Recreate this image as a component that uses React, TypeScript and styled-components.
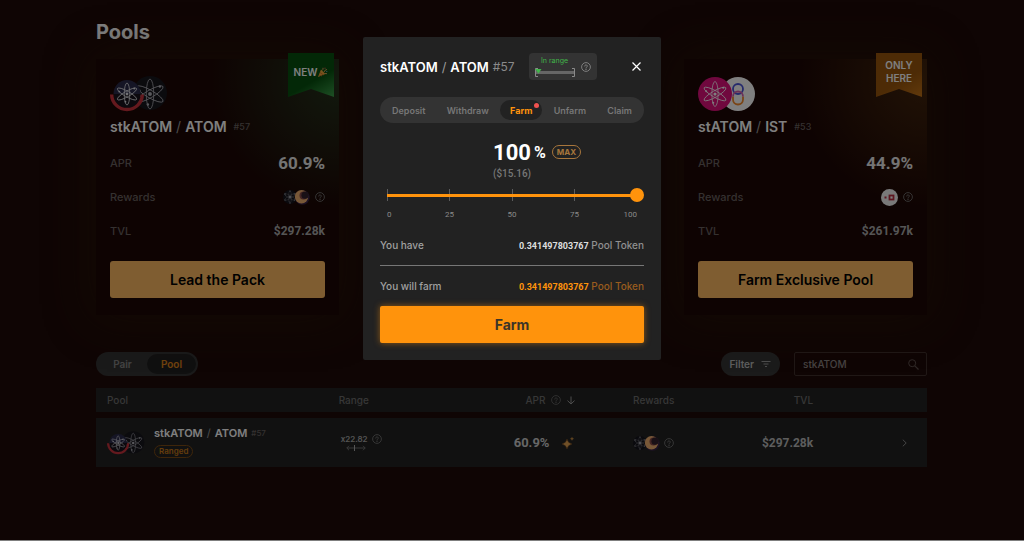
import React, { useState } from 'react';
import styled, { createGlobalStyle, css } from 'styled-components';

const sans = `Inter, "Liberation Sans", sans-serif`;
const digits = `Roboto, "Liberation Sans", sans-serif`;

const GlobalStyle = createGlobalStyle`
  *, *::before, *::after { box-sizing: border-box; }
  body { margin: 0; background: #1e0a08; font-family: ${sans}; }
  button, input { font-family: inherit; }
  button { border: 0; padding: 0; background: none; color: inherit; cursor: pointer; }
  h1, h2, p { margin: 0; }
  svg { display: block; flex: none; }
`;

/* ---------- icons ---------- */

const HelpIcon = ({ size = 10, color = '#777' }: { size?: number; color?: string }) => (
  <svg width={size} height={size} viewBox="0 0 20 20" fill="none" stroke={color} strokeWidth="1.7" aria-hidden="true">
    <circle cx="10" cy="10" r="8.8" />
    <path d="M7.4 8.2a2.6 2.4 0 1 1 3.8 2.1c-.9.5-1.2.9-1.2 1.8" strokeLinecap="round" />
    <circle cx="10" cy="14.6" r=".6" fill={color} stroke="none" />
    <circle cx="10" cy="14.6" r=".5" />
  </svg>
);

const Orbits = ({ cx, cy, r, color = '#e8e8e8', width = 0.9 }: { cx: number; cy: number; r: number; color?: string; width?: number }) => (
  <g transform={`translate(${cx} ${cy})`} fill="none" stroke={color} strokeWidth={width}>
    {[0, 60, 120].map((a) => (
      <ellipse key={a} rx={r * 0.25} ry={r} transform={`rotate(${a})`} />
    ))}
    <circle r={r * 0.13} fill={color} stroke="none" />
    <circle cx={-r * 0.7} cy={-r * 0.22} r={r * 0.08} fill={color} stroke="none" />
    <circle cx={r * 0.66} cy={-r * 0.5} r={r * 0.08} fill={color} stroke="none" />
    <circle cx={-r * 0.14} cy={r * 0.7} r={r * 0.08} fill={color} stroke="none" />
  </g>
);

const StkAtomPair = ({ width }: { width: number }) => (
  <svg width={width} height={Math.round((width * 36) / 58)} viewBox="0 0 58 36" role="img" aria-label="stkATOM and ATOM">
    <circle cx="40" cy="17" r="17" fill="#17161d" />
    <Orbits cx={40} cy={18} r={15} color="#b0b0b8" width={0.8} />
    <path d="M3.500 18a13.500 14 0 0 1 27 0z" fill="#2b2b4a" />
    <path d="M3.500 18a13.500 14 0 0 0 27 0z" fill="#18131c" />
    <path d="M1.700 18.500a15.300 15 0 0 0 30.600 0" fill="none" stroke="#c8323c" strokeWidth="3.400" />
    <Orbits cx={17} cy={18} r={11} color="#e4e4ea" width={0.8} />
  </svg>
);

const StAtomPair = () => (
  <svg width="58" height="36" viewBox="0 0 58 36" role="img" aria-label="stATOM and IST">
    <circle cx="40" cy="18" r="17" fill="#fff" />
    <circle cx="40" cy="13" r="5" fill="none" stroke="#4a55d8" strokeWidth="1.800" />
    <path d="M35 20.500v3a5 5 0 0 0 10 0v-3" fill="none" stroke="#f58a2c" strokeWidth="1.800" />
    <path d="M35 20.500a5 5 0 0 1 10 0" fill="none" stroke="#d460b0" strokeWidth="1.800" />
    <circle cx="17" cy="18" r="17" fill="#e0107c" />
    <Orbits cx={17} cy={18} r={12.500} color="#fff" width={0.8} />
  </svg>
);

const RewardPair = () => (
  <svg width="27" height="16" viewBox="0 0 27 16" role="img" aria-label="ATOM and moon token">
    <circle cx="7" cy="8" r="7" fill="#15141c" />
    <g fill="#b8b8be">
      <circle cx="7" cy="8" r="1.300" />
      <circle cx="7" cy="2" r=".6" /><circle cx="7" cy="14" r=".6" />
      <circle cx="2" cy="5" r=".7" /><circle cx="12" cy="5" r=".7" />
      <circle cx="2" cy="11" r=".6" /><circle cx="11.500" cy="11" r=".6" />
    </g>
    <Orbits cx={7} cy={8} r={6} color="#77777f" width={0.4} />
    <circle cx="19.300" cy="8.500" r="7.300" fill="#3a2348" />
    <circle cx="18.500" cy="7.800" r="6.700" fill="#f0b070" />
    <circle cx="20.500" cy="6.600" r="4" fill="#8a4a48" />
    <circle cx="22" cy="6.200" r="3.600" fill="#33202c" />
  </svg>
);

const BldReward = () => (
  <svg width="17" height="17" viewBox="0 0 17 17" role="img" aria-label="BLD">
    <circle cx="8.500" cy="8.500" r="8.500" fill="#f2f2f2" />
    <rect x="3.500" y="7.500" width="2" height="2" fill="#bb2d40" />
    <rect x="8.500" y="6.500" width="4" height="4" fill="#fff" stroke="#bb2d40" strokeWidth="1.800" />
  </svg>
);

const Party = () => (
  <svg width="11" height="11" viewBox="0 0 11 11" aria-hidden="true">
    <path d="M1 10 4 2.500 8.500 7z" fill="#f0a838" />
    <path d="M2 8 5 9M3 5.500 6.500 8" stroke="#c4682c" strokeWidth=".8" />
    <path d="M5 3.500Q6.500 2.500 6 .8M7 5Q8 2.500 10 2.500M8 6.500l2 .2" fill="none" stroke="#d8a05c" strokeWidth="1" />
    <circle cx="8" cy="1.200" r=".6" fill="#e05a5a" />
    <circle cx="9.800" cy="4.500" r=".6" fill="#6aa8e8" />
  </svg>
);

const Sparkle = () => (
  <svg width="14" height="14" viewBox="0 0 14 14" aria-hidden="true">
    <path d="M6 3q.7 4 5 5-4.300 1-5 5-.7-4-5-5 4.300-1 5-5z" fill="#e0a050" stroke="#7a4a1c" strokeWidth=".5" />
    <path d="M11 .8q.3 1.600 2 2-1.700.4-2 2-.3-1.600-2-2 1.700-.4 2-2z" fill="#c08840" />
  </svg>
);

const SpanIcon = () => (
  <svg width="20" height="6" viewBox="0 0 20 6" fill="none" stroke="#777" aria-hidden="true">
    <path d="M3 .8.8 3 3 5.200M.8 3h18.400M17 .8 19.200 3 17 5.200" strokeWidth=".9" />
    <path d="M8.500 0v6" stroke="#aaa" />
  </svg>
);

const RangeGauge = () => (
  <svg width="40" height="9" viewBox="0 0 40 9" aria-hidden="true">
    <path d="M3 .5H.5v8H3M37 .5h2.500v8H37" fill="none" stroke="#8a8a8a" />
    <rect x="1" y="3" width="38" height="3" fill="#666" />
    <path d="M0 1h6.500L3.500 5.500z" fill="#41b54a" />
  </svg>
);

/* ---------- page ---------- */

const Page = styled.main`
  min-height: 100vh;
  padding: 20px 97px 24px 96px;
  border-bottom: 1px solid #fff;
  background: #1e0a08;
  color: #fff;
`;

const PageTitle = styled.h1`
  font-size: 20px;
  line-height: 24px;
  font-weight: 700;
`;

const CardGrid = styled.section`
  display: grid;
  grid-template-columns: repeat(3, 1fr);
  column-gap: 51px;
  margin: 15px 0 37px;
`;

const Card = styled.article<{ $tint: string; $column: number }>`
  position: relative;
  grid-column: ${(p) => p.$column};
  display: flex;
  flex-direction: column;
  padding: 17px 14px;
  background: radial-gradient(circle at 100% 8%, ${(p) => p.$tint} 0, transparent 130px), #1c0604;
  box-shadow: 0 0 44px 4px rgba(50, 30, 4, 0.45);
`;

const Ribbon = styled.div<{ $from: string; $to: string }>`
  position: absolute;
  top: -6px;
  right: 5px;
  display: flex;
  align-items: center;
  justify-content: center;
  width: 46px;
  height: 44px;
  padding-bottom: 6px;
  clip-path: polygon(0 0, 100% 0, 100% 100%, 50% 82%, 0 100%);
  background: linear-gradient(150deg, ${(p) => p.$from} 60%, ${(p) => p.$to});
  font-size: 10px;
  line-height: 13px;
  font-weight: 600;
  text-align: center;
`;

const PairName = styled.h2<{ $size: number }>`
  display: flex;
  align-items: center;
  gap: 4px;
  font-size: ${(p) => p.$size}px;
  line-height: 18px;
  font-weight: 600;
  white-space: nowrap;
`;

const Slash = styled.span`
  font-weight: 400;
  color: #999;
`;

const PairId = styled.small<{ $size: number }>`
  font-size: ${(p) => p.$size}px;
  font-weight: 500;
  color: #6a6260;
`;

const CardHead = styled.div`
  display: grid;
  row-gap: 6px;
  margin-bottom: 18px;

  ${PairId} { margin-left: 3px; }
`;

const StatList = styled.dl`
  display: grid;
  row-gap: 16px;
  margin: 0 0 21px;
`;

const Stat = styled.div`
  display: flex;
  align-items: center;
  justify-content: space-between;
  height: 18px;

  dt {
    font-size: 11px;
    font-weight: 500;
    color: #6a6260;
  }

  dd {
    display: flex;
    align-items: center;
    gap: 5px;
    margin: 0;
  }
`;

const Figure = styled.span<{ $size: number; $color?: string }>`
  font-family: ${digits};
  font-size: ${(p) => p.$size}px;
  font-weight: 700;
  color: ${(p) => p.$color ?? '#fff'};
`;

const CardButton = styled.button`
  height: 37px;
  border-radius: 3px;
  background: #feba62;
  color: #000;
  font-size: 14px;
  font-weight: 600;
`;

const Toolbar = styled.div`
  display: flex;
  align-items: center;
  gap: 14px;
  margin-bottom: 6px;
`;

const Toggle = styled.div`
  display: flex;
  margin-right: auto;
  padding: 2px;
  border-radius: 12px;
  background: #343434;
`;

const ToggleItem = styled.button<{ $on?: boolean }>`
  width: 49px;
  height: 20px;
  border-radius: 10px;
  background: ${(p) => (p.$on ? '#202020' : 'transparent')};
  color: ${(p) => (p.$on ? '#e0841a' : '#858585')};
  font-size: 10px;
  font-weight: 600;
`;

const FilterButton = styled.button`
  display: flex;
  align-items: center;
  gap: 7px;
  height: 24px;
  padding: 0 9px 0 8px;
  border-radius: 12px;
  background: #363636;
  color: #bbb;
  font-size: 10px;
  font-weight: 600;
`;

const SearchBox = styled.label`
  display: flex;
  align-items: center;
  width: 133px;
  height: 24px;
  padding: 0 7px 0 8px;
  border: 1px solid #40302c;
  border-radius: 2px;
`;

const SearchInput = styled.input`
  flex: 1;
  min-width: 0;
  padding: 0;
  border: 0;
  outline: 0;
  background: none;
  color: #8e8684;
  font-size: 10px;
  font-weight: 500;
`;

const PoolTable = styled.table`
  width: 100%;
  table-layout: fixed;
  border-collapse: separate;
  border-spacing: 0 6px;

  th, td {
    padding: 0;
    background: #232323;
    text-align: left;
  }
  th {
    height: 24px;
    color: #6e6e6e;
    font-size: 10px;
    font-weight: 500;
  }
  td { height: 49px; }
  th:first-child, td:first-child { padding-left: 11px; }
  th:last-child, td:last-child { padding-right: 20px; }
`;

const Inline = styled.div<{ $end?: boolean; $gap?: number }>`
  display: flex;
  align-items: center;
  justify-content: ${(p) => (p.$end ? 'flex-end' : 'flex-start')};
  gap: ${(p) => p.$gap ?? 4}px;
`;

const Stack = styled.div`
  display: grid;
  justify-items: start;
  row-gap: 3px;
  padding-bottom: 3px;
`;

const RangedTag = styled.span`
  padding: 0 4px;
  border: 1px solid #7c4a14;
  border-radius: 7px;
  color: #c87a18;
  font-size: 8px;
  line-height: 11px;
  font-weight: 600;
`;

const RangeCell = styled.div`
  display: grid;
  justify-items: start;
  row-gap: 1px;
  padding: 0 0 1px 2px;

  > svg { margin-left: 5px; }
`;

const Multiplier = styled.span`
  font-size: 8px;
  line-height: 10px;
  font-weight: 600;
  color: #a8a8a8;
`;

const RowButton = styled.button`
  display: block;
  margin-left: auto;
`;

/* ---------- dialog ---------- */

const Overlay = styled.div`
  position: fixed;
  inset: 0;
  display: flex;
  align-items: flex-start;
  justify-content: center;
  padding-top: 37px;
  background: rgba(0, 0, 0, 0.5);
`;

const Dialog = styled.section`
  width: 298px;
  max-width: 100%;
  padding: 16px 17px 17px;
  border-radius: 2px;
  background: #222;
  color: #fff;
`;

const DialogHead = styled.header`
  display: flex;
  align-items: center;
  margin-bottom: 17px;
`;

const DialogId = styled.small`
  margin-left: 4px;
  font-size: 12px;
  color: #8a8a8a;
`;

const RangeBadge = styled.div`
  display: flex;
  align-items: center;
  gap: 6px;
  height: 27px;
  margin-left: 14px;
  padding: 0 6px;
  border-radius: 4px;
  background: #333;
`;

const RangeStatus = styled.div`
  display: grid;
  justify-items: center;
  row-gap: 3px;
  color: #41b54a;
  font-size: 7px;
  line-height: 9px;
`;

const CloseButton = styled.button`
  margin-left: auto;
  padding: 3px;
`;

const Tabs = styled.div`
  display: flex;
  align-items: center;
  justify-content: space-between;
  height: 26px;
  padding: 0 2px;
  border-radius: 13px;
  background: #333;
`;

const Tab = styled.button<{ $on?: boolean }>`
  position: relative;
  height: 20px;
  padding: 0 10px;
  border-radius: 10px;
  color: #777;
  font-size: 9px;
  font-weight: 600;
  ${(p) =>
    p.$on &&
    css`
      background: #222;
      color: #ff930c;
      font-weight: 700;
    `}
`;

const Dot = styled.i`
  position: absolute;
  top: 3px;
  right: 3px;
  width: 5px;
  height: 5px;
  border-radius: 50%;
  background: #f0524f;
`;

const Amount = styled.div`
  display: grid;
  grid-template-columns: 1fr auto 1fr;
  align-items: center;
  column-gap: 3px;
  height: 28px;
  margin-top: 15px;
`;

const AmountSide = styled.div`
  grid-column: 3;
  display: flex;
  align-items: center;
  gap: 6px;
`;

const AmountValue = styled(Figure)`
  grid-column: 2;
`;

const MaxButton = styled.button`
  height: 14px;
  padding: 0 4px;
  border: 1px solid #a8763c;
  border-radius: 7px;
  color: #a8763c;
  font-size: 8px;
  line-height: 12px;
  font-weight: 700;
`;

const Fiat = styled.p`
  font-family: ${digits};
  font-size: 10px;
  line-height: 16px;
  font-weight: 500;
  text-align: center;
  color: #777;
`;

const SliderArea = styled.div`
  position: relative;
  height: 14px;
  margin-top: 6px;
`;

const Ticks = styled.div`
  position: absolute;
  inset: 1px 7px;
  display: flex;
  justify-content: space-between;

  i { width: 1px; background: #5c5c5c; }
`;

const Slider = styled.input<{ $value: number }>`
  position: relative;
  display: block;
  width: 100%;
  height: 14px;
  margin: 0;
  appearance: none;
  background: none;

  &::-webkit-slider-runnable-track {
    height: 14px;
    background:
      linear-gradient(#ff930c, #ff930c) 7px 50% / calc((100% - 14px) * ${(p) => p.$value / 100}) 3px no-repeat,
      linear-gradient(#555, #555) 7px 50% / calc(100% - 14px) 1px no-repeat;
  }
  &::-webkit-slider-thumb {
    appearance: none;
    width: 14px;
    height: 14px;
    border-radius: 50%;
    background: #ff930c;
  }
`;

const Scale = styled.div`
  display: grid;
  grid-template-columns: 1fr 2fr 2fr 2fr 1fr;
  margin: 8px 7px 0;
  font-family: ${digits};
  font-size: 8px;
  line-height: 10px;
  text-align: center;
  color: #8a8a8a;

  span:first-child { text-align: left; }
  span:last-child { text-align: right; }
`;

const Line = styled.div<{ $accent?: boolean }>`
  display: flex;
  align-items: center;
  justify-content: space-between;
  height: 14px;
  color: #a0a0a0;
  font-size: 10px;
  font-weight: 500;

  > span:last-child { color: ${(p) => (p.$accent ? '#995c1e' : '#909090')}; }
`;

const Balance = styled.div`
  margin-top: 18px;
`;

const Divider = styled.hr`
  height: 1px;
  margin: 13px 0;
  border: 0;
  background: #777;
`;

const FarmButton = styled.button`
  width: 100%;
  height: 37px;
  margin-top: 13px;
  border-radius: 2px;
  background: #ff930c;
  box-shadow: 0 0 6px rgba(255, 147, 12, 0.5);
  color: #3c3428;
  font-size: 14px;
  font-weight: 700;
`;

type Pool = {
  a: string;
  b: string;
  id: string;
  apr: string;
  tvl: string;
  cta: string;
  column: number;
  tint: string;
  icons: React.ReactNode;
  reward: React.ReactNode;
  ribbon: React.ReactNode;
};

const pools: Pool[] = [
  {
    a: 'stkATOM', b: 'ATOM', id: '#57', apr: '60.9%', tvl: '$297.28k', cta: 'Lead the Pack',
    column: 1, tint: 'rgba(40, 66, 36, 0.75)',
    icons: <StkAtomPair width={58} />, reward: <RewardPair />,
    ribbon: <Ribbon $from="#06500e" $to="#3ca04a">NEW<Party /></Ribbon>,
  },
  {
    a: 'stATOM', b: 'IST', id: '#53', apr: '44.9%', tvl: '$261.97k', cta: 'Farm Exclusive Pool',
    column: 3, tint: 'rgba(80, 48, 16, 0.75)',
    icons: <StAtomPair />, reward: <BldReward />,
    ribbon: <Ribbon $from="#9a560c" $to="#c47418">ONLY<br />HERE</Ribbon>,
  },
];

const PoolCard = ({ pool }: { pool: Pool }) => (
  <Card $tint={pool.tint} $column={pool.column}>
    {pool.ribbon}
    <CardHead>
      {pool.icons}
      <PairName $size={14}>
        {pool.a} <Slash>/</Slash> {pool.b} <PairId $size={9}>{pool.id}</PairId>
      </PairName>
    </CardHead>
    <StatList>
      <Stat><dt>APR</dt><dd><Figure $size={17} $color="#e8e8e8">{pool.apr}</Figure></dd></Stat>
      <Stat><dt>Rewards</dt><dd>{pool.reward}<HelpIcon /></dd></Stat>
      <Stat><dt>TVL</dt><dd><Figure $size={12} $color="#aaa">{pool.tvl}</Figure></dd></Stat>
    </StatList>
    <CardButton>{pool.cta}</CardButton>
  </Card>
);

const tabs = ['Deposit', 'Withdraw', 'Farm', 'Unfarm', 'Claim'];

export default function App() {
  const [value, setValue] = useState(100);
  const [tab, setTab] = useState('Farm');
  const [query, setQuery] = useState('stkATOM');

  return (
    <>
      <GlobalStyle />
      <Page>
        <PageTitle>Pools</PageTitle>
        <CardGrid>
          {pools.map((p) => <PoolCard key={p.id} pool={p} />)}
        </CardGrid>

        <Toolbar>
          <Toggle>
            <ToggleItem>Pair</ToggleItem>
            <ToggleItem $on aria-pressed="true">Pool</ToggleItem>
          </Toggle>
          <FilterButton>
            Filter
            <svg width="10" height="8" viewBox="0 0 10 8" stroke="#999" aria-hidden="true">
              <path d="M.5 1.500h9M2.500 4h5M4 6.500h2" strokeWidth="1.200" />
            </svg>
          </FilterButton>
          <SearchBox>
            <SearchInput aria-label="Search pools" value={query} onChange={(e) => setQuery(e.target.value)} />
            <svg width="11" height="11" viewBox="0 0 11 11" fill="none" stroke="#5e504c" aria-hidden="true">
              <circle cx="4.200" cy="4.200" r="3.500" />
              <path d="m6.800 6.800 3.700 3.700" strokeWidth="1.200" />
            </svg>
          </SearchBox>
        </Toolbar>

        <PoolTable>
          <colgroup>
            <col width="29.2%" /><col width="16.4%" /><col width="12.1%" />
            <col width="11.9%" /><col width="16.7%" /><col width="13.7%" />
          </colgroup>
          <thead>
            <tr>
              <th>Pool</th>
              <th>Range</th>
              <th>
                <Inline $end $gap={6}>
                  APR <HelpIcon color="#666" />
                  <svg width="8" height="9" viewBox="0 0 8 9" fill="none" stroke="#999" aria-hidden="true">
                    <path d="M4 .5v7.500M.5 4.600 4 8l3.500-3.400" />
                  </svg>
                </Inline>
              </th>
              <th><Inline $end>Rewards</Inline></th>
              <th><Inline $end>TVL</Inline></th>
              <th aria-label="Open" />
            </tr>
          </thead>
          <tbody>
            <tr>
              <td>
                <Inline $gap={9}>
                  <StkAtomPair width={38} />
                  <Stack>
                    <PairName $size={11}>
                      stkATOM <Slash>/</Slash> ATOM <PairId $size={8}>#57</PairId>
                    </PairName>
                    <RangedTag>Ranged</RangedTag>
                  </Stack>
                </Inline>
              </td>
              <td>
                <RangeCell>
                  <Inline><Multiplier>x22.82</Multiplier><HelpIcon /></Inline>
                  <SpanIcon />
                </RangeCell>
              </td>
              <td><Inline $end $gap={12}><Figure $size={13} $color="#ccc">60.9%</Figure><Sparkle /></Inline></td>
              <td><Inline $end><RewardPair /><HelpIcon /></Inline></td>
              <td><Inline $end><Figure $size={12} $color="#bbb">$297.28k</Figure></Inline></td>
              <td>
                <RowButton aria-label="Open pool">
                  <svg width="5" height="8" viewBox="0 0 5 8" fill="none" stroke="#888" aria-hidden="true">
                    <path d="M.8.7 4.200 4 .8 7.300" />
                  </svg>
                </RowButton>
              </td>
            </tr>
          </tbody>
        </PoolTable>
      </Page>

      <Overlay>
        <Dialog role="dialog" aria-modal="true" aria-label="stkATOM / ATOM">
          <DialogHead>
            <PairName $size={13}>
              stkATOM <Slash>/</Slash> ATOM
            </PairName>
            <DialogId>#57</DialogId>
            <RangeBadge>
              <RangeStatus>In range<RangeGauge /></RangeStatus>
              <HelpIcon color="#8a8a8a" />
            </RangeBadge>
            <CloseButton aria-label="Close">
              <svg width="9" height="9" viewBox="0 0 9 9" stroke="#fff" strokeWidth="1.200" aria-hidden="true">
                <path d="m.5.5 8 8M8.500.5l-8 8" />
              </svg>
            </CloseButton>
          </DialogHead>

          <Tabs role="tablist">
            {tabs.map((t) => (
              <Tab key={t} role="tab" aria-selected={t === tab} $on={t === tab} onClick={() => setTab(t)}>
                {t}
                {t === 'Farm' && <Dot />}
              </Tab>
            ))}
          </Tabs>

          <Amount>
            <AmountValue $size={22}>{value}</AmountValue>
            <AmountSide>
              <Figure $size={16}>%</Figure>
              <MaxButton onClick={() => setValue(100)}>MAX</MaxButton>
            </AmountSide>
          </Amount>
          <Fiat>($15.16)</Fiat>

          <SliderArea>
            <Ticks><i /><i /><i /><i /><i /></Ticks>
            <Slider
              type="range" min={0} max={100} aria-label="Percentage to farm"
              value={value} $value={value} onChange={(e) => setValue(Number(e.target.value))}
            />
          </SliderArea>
          <Scale><span>0</span><span>25</span><span>50</span><span>75</span><span>100</span></Scale>

          <Balance>
            <Line><span>You have</span><span><Figure $size={9} $color="#ddd">0.341497803767</Figure> Pool Token</span></Line>
            <Divider />
            <Line $accent><span>You will farm</span><span><Figure $size={9} $color="#ff930c">0.341497803767</Figure> Pool Token</span></Line>
          </Balance>
          <FarmButton>Farm</FarmButton>
        </Dialog>
      </Overlay>
    </>
  );
}
